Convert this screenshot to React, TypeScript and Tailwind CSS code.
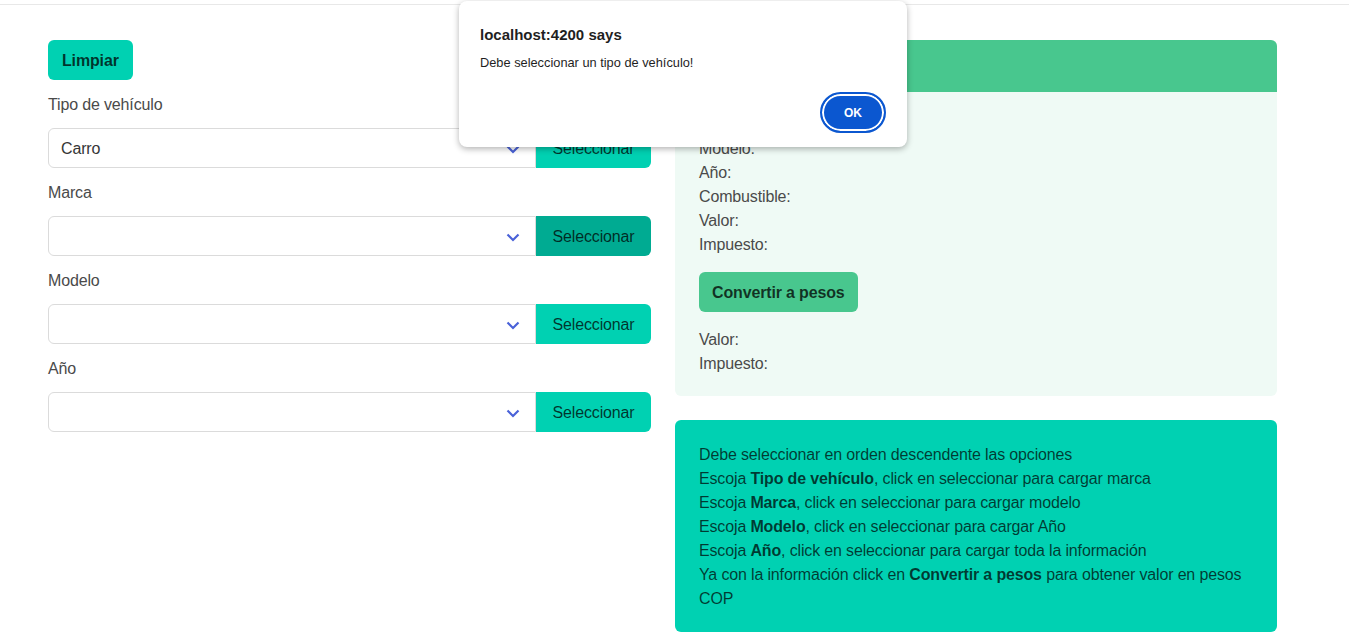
import React from "react";

const fields = [
  { label: "Tipo de vehículo", value: "Carro", active: false },
  { label: "Marca", value: "", active: true },
  { label: "Modelo", value: "", active: false },
  { label: "Año", value: "", active: false },
];

function Chevron() {
  return (
    <svg width="14" height="9" viewBox="0 0 14 9" className="absolute right-[15px] top-[16px]">
      <polyline points="1.5,1.5 7,7 12.5,1.5" fill="none" stroke="#4a62d8" strokeWidth="2.2" />
    </svg>
  );
}

function Field({ label, value, active }: { label: string; value: string; active: boolean }) {
  return (
    <div className="mb-[12px]">
      <p className="mb-[12px] h-[24px] pt-[1px] leading-[24px] text-[#4a4a4a]">{label}</p>
      <div className="flex h-[40px]">
        <div className="relative flex flex-1 items-center rounded-l-[6px] border border-[#dbdbdb] bg-white pl-[12px] pt-[1px] text-[#363636]">
          {value}
          <Chevron />
        </div>
        <button
          className={
            active
              ? "w-[115px] rounded-r-[6px] bg-[#00ab92] pt-[1px] text-[rgba(0,0,0,0.75)]"
              : "w-[115px] rounded-r-[6px] bg-[#00d1b2] pt-[1px] text-[rgba(0,0,0,0.75)]"
          }
        >
          Seleccionar
        </button>
      </div>
    </div>
  );
}

export default function App() {
  return (
    <div className="relative min-h-[643px] bg-white font-['Liberation_Sans',sans-serif] text-[16px] tracking-[-0.15px] text-[#4a4a4a]">
      <div className="h-[5px] border-b border-[#e8e8e8]" />

      <div className="flex gap-[24px] px-[48px] pt-[35px]">
        <section className="w-[603px]">
          <button className="mb-[12px] h-[40px] rounded-[6px] bg-[#00d1b2] px-[14px] pt-[1px] font-semibold text-[rgba(0,0,0,0.75)]">
            Limpiar
          </button>
          {fields.map((f) => (
            <Field key={f.label} {...f} />
          ))}
        </section>

        <section className="w-[602px]">
          <div className="overflow-hidden rounded-[6px] bg-[#effaf5]">
            <div className="h-[52px] bg-[#48c78e]" />
            <div className="px-[24px] pb-[20px] pt-[21px] leading-[24px] text-[#4a4a4a]">
              <p>Marca:</p>
              <p>Modelo:</p>
              <p>Año:</p>
              <p>Combustible:</p>
              <p>Valor:</p>
              <p>Impuesto:</p>
              <button className="mb-[16px] mt-[15px] h-[40px] rounded-[6px] bg-[#48c78e] px-[13px] pt-[1px] font-semibold text-[rgba(0,0,0,0.75)]">
                Convertir a pesos
              </button>
              <p>Valor:</p>
              <p>Impuesto:</p>
            </div>
          </div>

          <div className="mt-[24px] rounded-[6px] bg-[#00d1b2] pb-[21px] pl-[24px] pr-[40px] pt-[23px] leading-[24px] text-[rgba(0,0,0,0.72)]">
            <p>Debe seleccionar en orden descendente las opciones</p>
            <p>
              Escoja <b className="font-semibold">Tipo de vehículo</b>, click en seleccionar para cargar marca
            </p>
            <p>
              Escoja <b className="font-semibold">Marca</b>, click en seleccionar para cargar modelo
            </p>
            <p>
              Escoja <b className="font-semibold">Modelo</b>, click en seleccionar para cargar Año
            </p>
            <p>
              Escoja <b className="font-semibold">Año</b>, click en seleccionar para cargar toda la información
            </p>
            <p className="whitespace-nowrap">
              Ya con la información click en <b className="font-semibold">Convertir a pesos</b> para obtener valor en pesos
              <br />
              COP
            </p>
          </div>
        </section>
      </div>

      <div className="absolute left-[459px] top-[1px] h-[146px] w-[448px] rounded-[8px] bg-white px-[21px] pt-[24px] tracking-normal shadow-[0_2px_6px_rgba(0,0,0,0.3)]">
        <p className="text-[15px] font-semibold leading-[20px] text-[#1f1f1f]">localhost:4200 says</p>
        <p className="mt-[10px] text-[12.8px] leading-[16px] text-[#1f1f1f]">Debe seleccionar un tipo de vehículo!</p>
        <div className="mt-[21px] flex justify-end">
          <button className="h-[41px] w-[66px] rounded-full border-2 border-[#0b57d0] bg-[#0b57d0] text-[12px] font-bold text-white shadow-[inset_0_0_0_2px_white]">
            OK
          </button>
        </div>
      </div>
    </div>
  );
}
